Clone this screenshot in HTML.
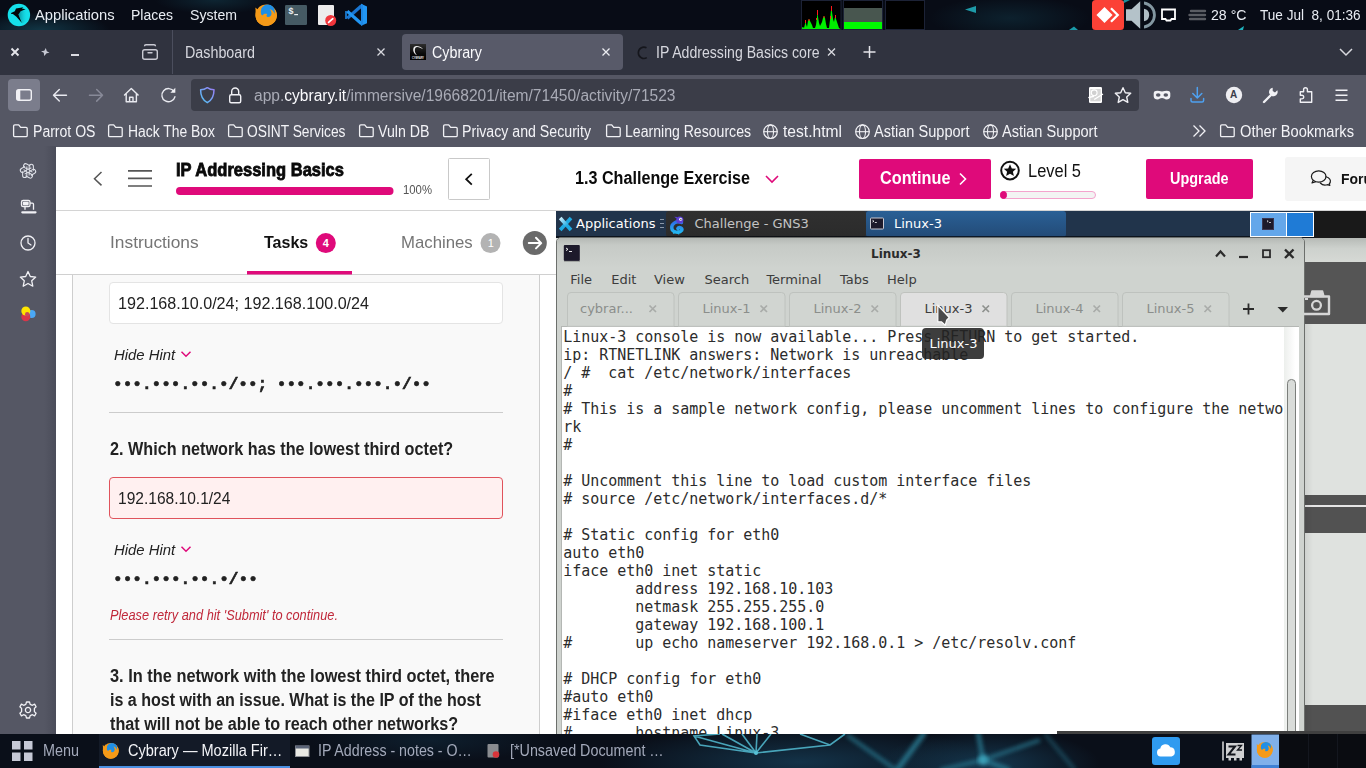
<!DOCTYPE html>
<html lang="en">
<head>
<meta charset="utf-8">
<title>Cybrary — Mozilla Firefox</title>
<style>
*{box-sizing:border-box;margin:0;padding:0}
html,body{width:1366px;height:768px;overflow:hidden;background:#fff}
body{position:relative;font-family:"Liberation Sans",sans-serif;color:#fff}
.a{position:absolute;white-space:nowrap}
.t{position:absolute;white-space:nowrap;line-height:1}
svg{position:absolute;overflow:visible}
/* ---------- top panel ---------- */
#toppanel{left:0;top:0;width:1366px;height:30px;background:#080c16;overflow:hidden}
#toppanel .t{font-size:15.5px;color:#e9edf3;top:6.8px}
/* ---------- firefox chrome ---------- */
#tabbar{left:0;top:30px;width:1366px;height:45px;background:#30333f}
#tabbar .t{font-size:16px;color:#d6d7de;top:15.3px}
#navbar{left:0;top:75px;width:1366px;height:40px;background:#555764}
#bmbar{left:0;top:115px;width:1366px;height:32px;background:#555764}
#bmbar .t{font-size:16px;color:#f3f3f7;top:8.8px}
#ffside{left:0;top:146px;width:56px;height:588px;background:linear-gradient(90deg,#555764 0,#555764 44px,#4b4d5a 56px)}
/* ---------- page ---------- */
#page{left:0;top:0;width:1366px;height:734px;background:#fff;overflow:hidden;color:#222;z-index:0}
#toppanel,#tabbar,#navbar,#bmbar,#ffside,#botpanel{z-index:2}
#page .t{color:#222}
.q{font-size:18px;font-weight:bold;color:#222}
.hh{font-size:15px;font-style:italic;color:#505050}
.dots{font-family:"Liberation Mono",monospace;font-size:16px;font-weight:bold;color:#222;-webkit-text-stroke:.55px #222}
.inp{font-size:18px;color:#383838}
/* gns3 desktop */
#gns{left:556px;top:211px;width:810px;height:523px;background:#dfe2df;overflow:hidden;font-family:"DejaVu Sans",sans-serif}
#gns .t{font-size:13px;color:#3c3c3c}
#gw{position:absolute;left:-556px;top:-211px;width:1366px;height:768px}
.tabl{color:#8b8e8b !important}
#term{position:absolute;left:563.300px;top:328.400px;letter-spacing:-0.031px;font-family:"DejaVu Sans Mono",monospace;font-size:15px;line-height:18px;color:#2c2c2c;white-space:pre}

/* ---------- bottom panel ---------- */
#botpanel{left:0;top:734px;width:1366px;height:34px;background:#0a0f19;overflow:hidden}
#botpanel .t{font-size:16px;color:#e9edf3;top:8.5px}
</style>
<style id="fit">
#tp1{transform:scaleX(0.9524);transform-origin:0 50%}
#tp2{transform:scaleX(0.9026);transform-origin:0 50%}
#tp3{transform:scaleX(0.9093);transform-origin:0 50%}
#tp4{transform:scaleX(0.9114);transform-origin:0 50%}
#tp5{transform:scaleX(0.8756);transform-origin:0 50%}
#tb1{transform:scaleX(0.8942);transform-origin:0 50%}
#tb2{transform:scaleX(0.8926);transform-origin:0 50%}
#tb3{transform:scaleX(0.8810);transform-origin:0 50%}
#url{transform:scaleX(0.9718);transform-origin:0 50%}
#bm0{transform:scaleX(0.8785);transform-origin:0 50%}
#bm1{transform:scaleX(0.8682);transform-origin:0 50%}
#bm2{transform:scaleX(0.8610);transform-origin:0 50%}
#bm3{transform:scaleX(0.8863);transform-origin:0 50%}
#bm4{transform:scaleX(0.8845);transform-origin:0 50%}
#bm5{transform:scaleX(0.8799);transform-origin:0 50%}
#bm6{transform:scaleX(0.9757);transform-origin:0 50%}
#bm7{transform:scaleX(0.9099);transform-origin:0 50%}
#bm8{transform:scaleX(0.9099);transform-origin:0 50%}
#bm9{transform:scaleX(0.9158);transform-origin:0 50%}
#h1{transform:scaleX(0.8928);transform-origin:0 50%}
#h2{transform:scaleX(0.9067);transform-origin:0 50%}
#h3{transform:scaleX(0.8969);transform-origin:0 50%}
#h4{transform:scaleX(0.9038);transform-origin:0 50%}
#h5{transform:scaleX(0.9131);transform-origin:0 50%}
#h6{transform:scaleX(0.9013);transform-origin:0 50%}
#t1{transform:scaleX(1.0203);transform-origin:0 50%}
#t2{transform:scaleX(0.9435);transform-origin:0 50%}
#t3{transform:scaleX(0.9854);transform-origin:0 50%}
#i1{transform:scaleX(0.9483);transform-origin:0 50%}
#hh1{transform:scaleX(0.9918);transform-origin:0 50%}
#d1{transform:scaleX(1.0036);transform-origin:0 50%}
#q2{transform:scaleX(0.9007);transform-origin:0 50%}
#i2{transform:scaleX(0.9145);transform-origin:0 50%}
#hh2{transform:scaleX(0.9918);transform-origin:0 50%}
#d2{transform:scaleX(1.0053);transform-origin:0 50%}
#err{transform:scaleX(0.9131);transform-origin:0 50%}
#q3a{transform:scaleX(0.9094);transform-origin:0 50%}
#q3b{transform:scaleX(0.8919);transform-origin:0 50%}
#q3c{transform:scaleX(0.8996);transform-origin:0 50%}
#bp0{transform:scaleX(0.8993);transform-origin:0 50%}
#bp1{transform:scaleX(0.9087);transform-origin:0 50%}
#bp2{transform:scaleX(0.8885);transform-origin:0 50%}
#bp3{transform:scaleX(0.8955);transform-origin:0 50%}
</style>
</head>
<body>
<div id="toppanel" class="a">
<svg width="1366" height="30" viewBox="0 0 1366 30" style="left:0;top:0">
<defs>
<radialGradient id="tg1" cx="0.5" cy="0.5" r="0.5"><stop offset="0" stop-color="#123a4a" stop-opacity=".9"/><stop offset="1" stop-color="#123a4a" stop-opacity="0"/></radialGradient>
<linearGradient id="pg" x1="0" y1="0" x2="1" y2="1"><stop offset="0" stop-color="#25f0ee"/><stop offset="1" stop-color="#0d8d9c"/></linearGradient>
</defs>
<ellipse cx="40" cy="30" rx="70" ry="18" fill="url(#tg1)"/>
<ellipse cx="215" cy="0" rx="60" ry="14" fill="url(#tg1)" opacity=".6"/>
<ellipse cx="1010" cy="18" rx="80" ry="22" fill="url(#tg1)" opacity=".5"/>
<polygon points="965,9.5 976,6 976,13" fill="#1e9aa8"/>
<polygon points="1238,30 1244,26 1243,30" fill="#1fb3bf"/><polygon points="1069,30 1074,26.500 1078,30" fill="#1a9aa8"/>
<polygon points="1122,4 1130,0 1124,0" fill="#1a8f9c"/>
<!-- parrot logo -->
<circle cx="18.900" cy="15" r="11.200" fill="#15e0ea"/>
<linearGradient id="psh" x1="0" y1="0" x2="1" y2="0"><stop offset="0" stop-color="#0a8d99"/><stop offset="1" stop-color="#15e0ea" stop-opacity="0"/></linearGradient>
<path d="M18.400 14 L21.500 10.800 L27 10.500 L28 20 L22.500 23.500Z" fill="url(#psh)"/>
<path d="M11.100 13.100 L14.800 11.300 L16 8.400 L23.400 7.200 L21.900 8.400 L25.600 9.200 L20.700 11.300 L18.400 14.500 L21.900 23 L16.400 16.800 L12.900 14.100 L11.300 14.100Z" fill="#020608"/>
<!-- firefox -->
<g id="ffx">
<circle cx="266.200" cy="15.200" r="10.700" fill="#f59a18"/>
<circle cx="267.800" cy="11.800" r="7.300" fill="#1f8fe6"/>
<path d="M255.300 7.500 L257.800 9.500 L259.500 6.500 L261.300 9.300 C259.800 12 260.500 14.500 262.500 15.500 C263.500 13.800 265.500 13.300 267.300 14.200 C266.200 15 266.200 16.500 267.500 17 C269.500 17.500 271.500 16 271.500 13.500 C271.500 11.500 270.500 10 269.500 9 C272 9.500 274 11.500 274.500 14 C275 12 274.800 10 274 8.500 C276.500 11 277.500 14.500 276.500 18 C275 23 270.500 26 266 25.900 C260 25.800 255.500 21 255.500 15.200 C255.500 12.500 255.800 10 255.300 7.500Z" fill="#f59a18"/>
</g>
<!-- terminal -->
<rect x="285" y="5" width="22" height="20" rx="1.200" fill="#455a64"/>
<path d="M294.200 14.600 H298" stroke="#e8eef0" stroke-width="1.200"/>
<!-- doc -->
<rect x="318" y="5" width="16" height="20" rx="1" fill="#ececec"/>
<circle cx="330.700" cy="20.500" r="5.500" fill="#f0353b"/>
<path d="M328.600 22.400 L332.800 18.700" stroke="#fff" stroke-width="1.700" stroke-linecap="round"/>
<!-- vscode -->
<path d="M361.500 5.800 L347.300 18.300" stroke="#1976d2" stroke-width="3.200" fill="none"/>
<path d="M361.500 23.800 L347.300 11.300" stroke="#2196f3" stroke-width="3.200" fill="none"/>
<path d="M346 11 V19" stroke="#1e88e5" stroke-width="1.600"/>
<path d="M361 3.800 L367 6.500 V23.300 L361 25.800 Z" fill="#2196f3"/>
<path d="M361 3.800 L363 4.700 V24.900 L361 25.800Z" fill="#1e88e5"/>
<!-- graphs -->
<rect x="801.5" y="0.5" width="39.5" height="29" fill="#000" stroke="#1c2236" stroke-width="1"/>
<path d="M802 29 L802 27.5 L803 27 L804 28 L805 24 L805.5 20 L806 24 L807 27 L808 21 L809 19 L810 21 L811 23 L812 25 L813 28 L815 28 L816 25 L817 17 L817.5 10 L818 17 L819 23 L820 26 L821 24 L822 22 L823 18 L824 16 L825 18 L826 24 L827 28 L829 28 L830 20 L831 10 L831.5 6 L832 12 L833 19 L834 22 L835 17 L835.5 15 L836 19 L837 22 L838 25 L839 28 L840.5 29 Z" fill="#00f000"/>
<path d="M805.5 20 L805.5 23 M809 19 L809 21 M817.5 10 L817.5 15 M824 16 L824 18 M831.5 6 L831.5 11 M835.5 15 L835.5 18 M816.5 18 L816.5 20 M830.5 16 L830.5 19" stroke="#ff1a1a" stroke-width="1"/>
<rect x="843.5" y="0.5" width="39" height="29" fill="#000" stroke="#1c2236" stroke-width="1"/>
<rect x="844" y="8" width="38" height="14" fill="#48564f"/>
<rect x="844" y="22" width="38" height="7" fill="#00fb00"/>
<rect x="885.5" y="0.5" width="39" height="29" fill="#000" stroke="#1c2236" stroke-width="1"/>
<!-- anydesk -->
<rect x="1092" y="0" width="32" height="30" rx="3.500" fill="#fb4136"/>
<rect x="1098.800" y="9.300" width="11.400" height="11.400" transform="rotate(45 1104.500 15)" fill="#fff"/>
<path d="M1111 8.300 L1117.700 15 L1111 21.700" fill="none" stroke="#fff" stroke-width="2.300"/>
<!-- volume -->
<path d="M1126 9.300 H1131.500 L1140.200 1.300 V28.700 L1131.500 20.700 H1126Z" fill="#b4c2c9"/>
<path d="M1144 1.600 A13.500 13.500 0 0 1 1144 28.400 L1144 25.400 A10.500 10.500 0 0 0 1144 4.600Z" fill="#8397a1"/>
<path d="M1144 8.800 A6.300 6.300 0 0 1 1144 21.200Z" fill="#b0bec5"/>
<!-- display -->
<path d="M1162 9.5 H1175 V19 H1171.5 L1170.5 20.5 H1166.5 L1165.5 19 H1162Z" fill="none" stroke="#fff" stroke-width="1.8"/>
<!-- hamburger -->
<path d="M1191 11 H1205 M1189.500 15 H1205 M1190 19 H1205" stroke="#5a5d63" stroke-width="2.4" stroke-linecap="round"/>
</svg>
<span class="t" id="tp1" style="left:35px">Applications</span>
<span class="t" id="tp2" style="left:131px">Places</span>
<span class="t" id="tp3" style="left:190px">System</span>
<span class="t" style="left:288.300px;top:8px;font-size:9px;font-weight:bold;font-family:'Liberation Mono',monospace;color:#e8eef0">$</span>
<span class="t" id="tp4" style="left:1211px">28 °C</span>
<span class="t" id="tp5" style="left:1260px">Tue Jul&nbsp; 8, 01:36</span>
</div>
<div id="tabbar" class="a">
<svg width="1366" height="45" viewBox="0 30 1366 45" style="left:0;top:0">
<!-- window controls -->
<path d="M11.500 48.500 L18.500 55.500 M18.500 48.500 L11.500 55.500" stroke="#e4e5ea" stroke-width="1.9"/>
<path d="M45.800 48 L46.800 51.300 L49.500 52.800 L46.600 53.300 L44.200 56 L43.800 52.700 L41 51.200 L44.300 50.800Z" fill="#c6c8d3"/>
<path d="M71 55 H79" stroke="#e4e5ea" stroke-width="1.9"/>
<!-- firefox view -->
<rect x="142.700" y="49.700" width="14.600" height="9.600" rx="2" fill="none" stroke="#c9cad3" stroke-width="1.400"/>
<path d="M144.500 46.200 Q144.500 44.700 146 44.700 H154 Q155.500 44.700 155.500 46.200" fill="none" stroke="#c9cad3" stroke-width="1.400"/>
<path d="M148 52.800 H152" stroke="#c9cad3" stroke-width="1.400" stroke-linecap="round"/>
<path d="M172.500 30 V74" stroke="#4b4e5d" stroke-width="1"/>
<!-- tab closes -->
<path d="M377.500 48.500 L384.500 55.500 M384.500 48.500 L377.500 55.500" stroke="#d8d9df" stroke-width="1.300"/>
<rect x="402" y="34" width="221" height="36" rx="4" fill="#585a69"/>
<path d="M602.500 48.500 L609.500 55.500 M609.500 48.500 L602.500 55.500" stroke="#ecedf2" stroke-width="1.300"/>
<path d="M828 48.500 L835 55.500 M835 48.500 L828 55.500" stroke="#d8d9df" stroke-width="1.300"/>
<!-- cybrary favicon -->
<linearGradient id="cyg" x1="0" y1="0" x2="0" y2="1"><stop offset="0" stop-color="#2e2e2e"/><stop offset=".6" stop-color="#0a0a0a"/><stop offset="1" stop-color="#000"/></linearGradient>
<rect x="410" y="44" width="16" height="16" fill="url(#cyg)"/>
<path d="M423.200 49.300 C420.500 46.300 416 45.300 414.300 46.800 C412.300 48.800 413 53.500 417 55.300 C414.800 53.300 414.300 50 415.300 48 C416.500 46 420 47 423.200 49.300Z" fill="#efefef"/>
<text x="418" y="58.700" font-size="3.200" font-weight="bold" font-family="Liberation Sans, sans-serif" fill="#e6e6e6" text-anchor="middle" textLength="12" lengthAdjust="spacingAndGlyphs">CYBRARY</text>
<!-- spinner -->
<path d="M646.500 47.800 A5.600 5.600 0 1 0 646.800 57.600" fill="none" stroke="#15161c" stroke-width="1.600"/>
<!-- new tab -->
<path d="M869.500 46 V58 M863.500 52 H875.500" stroke="#e4e5ea" stroke-width="1.500"/>
<path d="M1340 49 L1346 55 L1352 49" fill="none" stroke="#d8d9df" stroke-width="1.500"/>
</svg>
<span class="t" id="tb1" style="left:185px">Dashboard</span>
<span class="t" id="tb2" style="left:432px;color:#fbfbfe">Cybrary</span>
<span class="t" id="tb3" style="left:656px">IP Addressing Basics core</span>
</div>
<div id="navbar" class="a">
<svg width="1366" height="40" viewBox="0 75 1366 40" style="left:0;top:0">
<rect x="8" y="79" width="32" height="32" rx="4" fill="#7b7d8c"/>
<rect x="16.700" y="89.700" width="14.600" height="10.600" rx="2" fill="none" stroke="#f1f1f5" stroke-width="1.400"/>
<path d="M17 90 H20.300 V100 H17Z" fill="#f1f1f5"/>
<!-- back -->
<path d="M66.500 95.300 H53.500 M59.300 89.500 L53.500 95.300 L59.300 101.100" fill="none" stroke="#e9eaf0" stroke-width="1.400" stroke-linecap="round" stroke-linejoin="round"/>
<path d="M89.500 95.300 H102.500 M96.700 89.500 L102.500 95.300 L96.700 101.100" fill="none" stroke="#888a98" stroke-width="1.500" stroke-linecap="round" stroke-linejoin="round"/>
<!-- home -->
<path d="M124.500 95 L131.300 88.500 L138.100 95 M126.200 93.600 V101.800 H136.400 V93.600 M129.600 101.800 V97.300 H133 V101.800" fill="none" stroke="#e9eaf0" stroke-width="1.400" stroke-linecap="round" stroke-linejoin="round"/>
<!-- reload -->
<path d="M174 91.500 A6.600 6.600 0 1 0 174.900 96.800" fill="none" stroke="#e9eaf0" stroke-width="1.400" stroke-linecap="round"/>
<path d="M175.300 87.800 V92.800 H170.300Z" fill="#f1f1f5"/>
<!-- url bar -->
<rect x="191" y="79" width="948" height="32" rx="4" fill="#3b3d48"/>
<defs><linearGradient id="shg" x1="0" y1="1" x2="1" y2="0"><stop offset="0" stop-color="#51c8f5"/><stop offset="1" stop-color="#9a7cf5"/></linearGradient></defs>
<path d="M207.300 87.700 C209.500 89.300 212 89.800 214 89.800 C214 96 212.500 100 207.300 102.700 C202.100 100 200.600 96 200.600 89.800 C202.600 89.800 205.100 89.300 207.300 87.700Z" fill="none" stroke="url(#shg)" stroke-width="1.500" stroke-linejoin="round"/>
<!-- lock -->
<rect x="229.700" y="94.700" width="11" height="8" rx="1.500" fill="none" stroke="#f1f1f5" stroke-width="1.400"/>
<path d="M231.700 94.500 V91.500 A3.500 3.500 0 0 1 238.700 91.500 V94.500" fill="none" stroke="#f1f1f5" stroke-width="1.400"/>
<!-- reader -->
<rect x="1089" y="87" width="13" height="16" rx="1.200" fill="#fff"/>
<rect x="1090.300" y="89" width="10.400" height="12.300" fill="#d6d6d6"/>
<circle cx="1094.200" cy="92.800" r="2.900" fill="#d0d0d0" stroke="#fff" stroke-width="1.100"/>
<path d="M1088.300 97.600 L1094 96.200 M1094.200 99.500 L1103 94" stroke="#fff" stroke-width="1.400"/>
<!-- star -->
<path d="M1123 87.700 L1125.300 92.700 L1130.700 93.300 L1126.700 97 L1127.800 102.400 L1123 99.700 L1118.200 102.400 L1119.300 97 L1115.300 93.300 L1120.700 92.700Z" fill="none" stroke="#f1f1f5" stroke-width="1.400" stroke-linejoin="round"/>
<!-- mask -->
<path d="M1153.700 93.300 C1153.700 90.600 1157 90.200 1162 91.600 C1167 90.200 1170.300 90.600 1170.300 93.300 V96.300 C1170.300 99.500 1166 100.400 1164.100 98.600 C1163 97.700 1161 97.700 1159.900 98.600 C1158 100.400 1153.700 99.500 1153.700 96.300Z" fill="#f1f1f5"/>
<ellipse cx="1158.200" cy="95" rx="2.300" ry="1.700" fill="#555764"/><ellipse cx="1165.800" cy="95" rx="2.300" ry="1.700" fill="#555764"/>
<!-- download -->
<path d="M1197.300 87.500 V97.800 M1192.800 93.500 L1197.300 98 L1201.800 93.500 M1191 98.500 V100.500 Q1191 102 1192.500 102 H1202.100 Q1203.600 102 1203.600 100.500 V98.500" fill="none" stroke="#4ea1f0" stroke-width="1.500" stroke-linecap="round" stroke-linejoin="round"/>
<!-- A -->
<circle cx="1234" cy="95" r="8.200" fill="#eeeef2"/>
<!-- wrench -->
<path d="M1264 102 L1270.500 95.500" stroke="#f1f1f5" stroke-width="2.400" stroke-linecap="round"/>
<path d="M1277.300 90.300 A4.300 4.300 0 1 1 1272.700 87.700 L1272.700 91 L1275 92.500Z" fill="#f1f1f5"/>
<!-- puzzle -->
<path d="M1300.300 91.700 H1303.600 V89.600 A1.900 1.900 0 0 1 1307.400 89.600 V91.700 H1311.700 V102.300 H1300.300 V98.900 H1302 A1.800 1.800 0 0 0 1302 95.300 H1300.300Z" fill="none" stroke="#f1f1f5" stroke-width="1.400" stroke-linejoin="round"/>
<!-- menu -->
<path d="M1335.500 90.300 H1347.500 M1335.500 95.300 H1347.500 M1335.500 100.300 H1347.500" stroke="#f1f1f5" stroke-width="1.400"/>
</svg>
<span class="t" id="url" style="left:253.500px;top:13px;font-size:16px;color:#a9abb6">app.<span style="color:#fbfbfe">cybrary.it</span>/immersive/19668201/item/71450/activity/71523</span>
<span class="t" style="left:1230px;top:15px;font-size:10px;font-weight:bold;color:#3a3c49;line-height:1">A</span>
</div>
<div id="bmbar" class="a"><svg width="1366" height="31" viewBox="0 115 1366 31" style="left:0;top:0"><path d="M13.6 126 Q13.6 124.800 14.8 124.800 H18.7 L20.7 127.400 H26.0 Q27.2 127.400 27.2 128.600 V135.400 Q27.2 136.600 26.0 136.600 H14.8 Q13.6 136.600 13.6 135.400Z" fill="none" stroke="#f1f1f5" stroke-width="1.300" stroke-linejoin="round"/><path d="M108.6 126 Q108.6 124.800 109.8 124.800 H113.7 L115.7 127.400 H121.0 Q122.2 127.400 122.2 128.600 V135.400 Q122.2 136.600 121.0 136.600 H109.8 Q108.6 136.600 108.6 135.400Z" fill="none" stroke="#f1f1f5" stroke-width="1.300" stroke-linejoin="round"/><path d="M228.6 126 Q228.6 124.800 229.8 124.800 H233.7 L235.7 127.400 H241.0 Q242.2 127.400 242.2 128.600 V135.400 Q242.2 136.600 241.0 136.600 H229.8 Q228.6 136.600 228.6 135.400Z" fill="none" stroke="#f1f1f5" stroke-width="1.300" stroke-linejoin="round"/><path d="M359.6 126 Q359.6 124.800 360.8 124.800 H364.7 L366.7 127.400 H372.0 Q373.2 127.400 373.2 128.600 V135.400 Q373.2 136.600 372.0 136.600 H360.8 Q359.6 136.600 359.6 135.400Z" fill="none" stroke="#f1f1f5" stroke-width="1.300" stroke-linejoin="round"/><path d="M443.6 126 Q443.6 124.800 444.8 124.800 H448.7 L450.7 127.400 H456.0 Q457.2 127.400 457.2 128.600 V135.400 Q457.2 136.600 456.0 136.600 H444.8 Q443.6 136.600 443.6 135.400Z" fill="none" stroke="#f1f1f5" stroke-width="1.300" stroke-linejoin="round"/><path d="M606.6 126 Q606.6 124.800 607.8 124.800 H611.7 L613.7 127.400 H619.0 Q620.2 127.400 620.2 128.600 V135.400 Q620.2 136.600 619.0 136.600 H607.8 Q606.6 136.600 606.6 135.400Z" fill="none" stroke="#f1f1f5" stroke-width="1.300" stroke-linejoin="round"/><path d="M1220.6 126 Q1220.6 124.800 1221.8 124.800 H1225.7 L1227.7 127.400 H1233.0 Q1234.2 127.400 1234.2 128.600 V135.400 Q1234.2 136.600 1233.0 136.600 H1221.8 Q1220.6 136.600 1220.6 135.400Z" fill="none" stroke="#f1f1f5" stroke-width="1.300" stroke-linejoin="round"/><circle cx="770.5" cy="131.700" r="6.800" fill="none" stroke="#f1f1f5" stroke-width="1.200"/><ellipse cx="770.5" cy="131.700" rx="3" ry="6.800" fill="none" stroke="#f1f1f5" stroke-width="1.100"/><path d="M763.7 131.700 H777.3" stroke="#f1f1f5" stroke-width="1.100"/><circle cx="862.5" cy="131.700" r="6.800" fill="none" stroke="#f1f1f5" stroke-width="1.200"/><ellipse cx="862.5" cy="131.700" rx="3" ry="6.800" fill="none" stroke="#f1f1f5" stroke-width="1.100"/><path d="M855.7 131.700 H869.3" stroke="#f1f1f5" stroke-width="1.100"/><circle cx="990.5" cy="131.700" r="6.800" fill="none" stroke="#f1f1f5" stroke-width="1.200"/><ellipse cx="990.5" cy="131.700" rx="3" ry="6.800" fill="none" stroke="#f1f1f5" stroke-width="1.100"/><path d="M983.7 131.700 H997.3" stroke="#f1f1f5" stroke-width="1.100"/><path d="M1193.500 125.500 L1199 131 L1193.500 136.500 M1199.500 125.500 L1205 131 L1199.500 136.500" fill="none" stroke="#f1f1f5" stroke-width="1.300"/></svg><span class="t" id="bm0" style="left:32.5px">Parrot OS</span><span class="t" id="bm1" style="left:128px">Hack The Box</span><span class="t" id="bm2" style="left:247px">OSINT Services</span><span class="t" id="bm3" style="left:378px">Vuln DB</span><span class="t" id="bm4" style="left:462px">Privacy and Security</span><span class="t" id="bm5" style="left:624.5px">Learning Resources</span><span class="t" id="bm6" style="left:783px">test.html</span><span class="t" id="bm7" style="left:874px">Astian Support</span><span class="t" id="bm8" style="left:1002px">Astian Support</span><span class="t" id="bm9" style="left:1240px">Other Bookmarks</span></div>
<div id="ffside" class="a">
<svg width="56" height="587" viewBox="0 146 56 587" style="left:0;top:0">
<g fill="none" stroke="#f1f1f5" stroke-width="1.300">
<!-- chatgpt -->
<g transform="translate(28 170.900) scale(.84)" stroke="#dfe1e8" stroke-width="1.250"><path d="M1.400 -0.800 V-5.400 A2.500 2.500 0 0 1 6.400 -5.400 V-0.300" transform="rotate(0)"/><path d="M1.400 -0.800 L5.300 1.500" transform="rotate(0)"/><path d="M1.400 -0.800 V-5.400 A2.500 2.500 0 0 1 6.400 -5.400 V-0.300" transform="rotate(60)"/><path d="M1.400 -0.800 L5.300 1.500" transform="rotate(60)"/><path d="M1.400 -0.800 V-5.400 A2.500 2.500 0 0 1 6.400 -5.400 V-0.300" transform="rotate(120)"/><path d="M1.400 -0.800 L5.300 1.500" transform="rotate(120)"/><path d="M1.400 -0.800 V-5.400 A2.500 2.500 0 0 1 6.400 -5.400 V-0.300" transform="rotate(180)"/><path d="M1.400 -0.800 L5.300 1.500" transform="rotate(180)"/><path d="M1.400 -0.800 V-5.400 A2.500 2.500 0 0 1 6.400 -5.400 V-0.300" transform="rotate(240)"/><path d="M1.400 -0.800 L5.300 1.500" transform="rotate(240)"/><path d="M1.400 -0.800 V-5.400 A2.500 2.500 0 0 1 6.400 -5.400 V-0.300" transform="rotate(300)"/><path d="M1.400 -0.800 L5.300 1.500" transform="rotate(300)"/></g>
<!-- synced tabs -->
<path d="M25 209.800 V204.200 Q25 203.200 26 203.200 H32.500 Q33.500 203.200 33.500 204.200 V209.800" /><path d="M22.300 212.300 H35.500" stroke-width="2.200" stroke-linecap="round"/><rect x="21.500" y="200.500" width="8.500" height="6" rx="1.600" fill="#555764"/><rect x="22.800" y="201.800" width="5.900" height="3.400" rx="1" fill="#f1f1f5" stroke="none"/>
<!-- history -->
<circle cx="28" cy="243" r="7"/><path d="M28 238.500 V243 L31 245" stroke-linecap="round"/>
<!-- bookmarks star -->
<path d="M28 271.500 L30.300 276.500 L35.700 277.100 L31.700 280.800 L32.800 286.200 L28 283.500 L23.200 286.200 L24.300 280.800 L20.300 277.100 L25.700 276.500Z" stroke-linejoin="round"/>
<!-- settings -->
<g transform="translate(28 710)"><circle r="2.600"/><path d="M-1.500 -8 H1.500 L2.200 -5.600 L4.400 -4.700 L6.600 -5.900 L8.100 -3.300 L6.400 -1.600 V1.600 L8.100 3.300 L6.600 5.900 L4.400 4.700 L2.200 5.600 L1.500 8 H-1.500 L-2.200 5.600 L-4.400 4.700 L-6.600 5.900 L-8.100 3.300 L-6.400 1.600 V-1.600 L-8.100 -3.300 L-6.600 -5.900 L-4.400 -4.700 L-2.200 -5.600Z" stroke-linejoin="round"/></g>
</g>
<circle cx="31.600" cy="314" r="4" fill="#4aa8f5"/><circle cx="25.800" cy="316.700" r="4.500" fill="#d9364a"/><circle cx="25.800" cy="311" r="4.500" fill="#ffe600"/><circle cx="27.200" cy="314.300" r="2.200" fill="#c94a5a"/>
</svg>
</div>
<div id="page" class="a">
<!-- header -->
<div class="a" style="left:56px;top:146px;width:1310px;height:65px;background:#fff;border-bottom:1px solid #d4d4d4"></div>
<svg width="1310" height="130" viewBox="56 146 1310 130" style="left:56px;top:146px">
<path d="M101.500 172 L94.500 178.700 L101.500 185.400" fill="none" stroke="#555" stroke-width="1.500"/>
<path d="M128 170.800 H152 M128 178.400 H152 M128 186 H152" stroke="#555" stroke-width="1.700"/>
<rect x="176" y="187" width="217.500" height="8" rx="4" fill="#df0a7a"/>
<rect x="448.500" y="158.500" width="41" height="41" rx="1" fill="#fff" stroke="#c9c9c9"/>
<path d="M471.800 173.800 L466.200 179.200 L471.800 184.600" fill="none" stroke="#111" stroke-width="1.800"/>
<path d="M766 176 L772 182 L778 176" fill="none" stroke="#df0a7a" stroke-width="1.600"/>
<rect x="859" y="159" width="132" height="40" rx="2" fill="#df0a7a"/>
<path d="M960 173.500 L965.500 179 L960 184.500" fill="none" stroke="#fff" stroke-width="1.600"/>
<circle cx="1010" cy="170.600" r="8.800" fill="none" stroke="#111" stroke-width="2"/>
<path d="M1010 164.300 L1011.800 168.400 L1016.200 168.800 L1012.900 171.700 L1013.900 176.100 L1010 173.800 L1006.100 176.100 L1007.100 171.700 L1003.800 168.800 L1008.200 168.400Z" fill="#111"/>
<rect x="1000.500" y="191.500" width="95" height="7" rx="3.500" fill="#f3f3f3" stroke="#f4a3cd"/>
<rect x="1000.500" y="191.500" width="6" height="7" rx="3" fill="#df0a7a" stroke="#df0a7a"/>
<rect x="1146" y="159" width="107" height="40" rx="2" fill="#df0a7a"/>
<rect x="1285" y="157" width="90" height="44" rx="3" fill="#f5f5f5"/>
<ellipse cx="1318.700" cy="176.500" rx="7.300" ry="5.600" fill="#f5f5f5" stroke="#1a1a1a" stroke-width="1.200"/>
<path d="M1313.300 180.200 L1312 183 L1315.800 181.700" fill="none" stroke="#1a1a1a" stroke-width="1.200" stroke-linejoin="round"/>
<path d="M1326 176.800 C1329 177.800 1330.800 179.800 1330.300 182 C1330.100 182.800 1329.700 183.400 1329.200 183.900 L1329.900 185.300 L1327.300 184.700 C1325 185.500 1322 184.800 1320.300 183" fill="none" stroke="#1a1a1a" stroke-width="1.200" stroke-linejoin="round" stroke-linecap="round"/>
<!-- tab row -->
<path d="M56 274.500 H556" stroke="#d0d0d0"/>
<rect x="247" y="271" width="105" height="3.500" fill="#df0a7a"/>
<circle cx="325.800" cy="243.100" r="10" fill="#df0a7a"/>
<circle cx="490.500" cy="243.100" r="10" fill="#b3b3b3"/>
<circle cx="534.800" cy="243.100" r="12" fill="#6a6a6a"/>
<path d="M528.800 243.100 H540.800 M536 237.800 L541.200 243.100 L536 248.400" fill="none" stroke="#fff" stroke-width="2" stroke-linecap="round" stroke-linejoin="round"/>
</svg>
<span class="t" id="h1" style="left:176px;top:160.7px;font-size:18.5px;font-weight:bold;color:#0a0a0a;-webkit-text-stroke:0.8px #0a0a0a">IP Addressing Basics</span>
<span class="t" id="h2" style="left:402.500px;top:184.1px;font-size:12.5px;color:#555">100%</span>
<span class="t" id="h3" style="left:574.500px;top:169.2px;font-size:18px;font-weight:bold;color:#0a0a0a">1.3 Challenge Exercise</span>
<span class="t" id="h4" style="left:879.500px;top:169.2px;font-size:18px;font-weight:bold;color:#fff">Continue</span>
<span class="t" id="h5" style="left:1028px;top:161.7px;font-size:18px;color:#111">Level 5</span>
<span class="t" id="h6" style="left:1169.500px;top:170.5px;font-size:16px;font-weight:bold;color:#fff">Upgrade</span>
<span class="t" id="h7" style="left:1340.500px;top:171.200px;font-size:15.500px;font-weight:bold;color:#111;transform:scaleX(.9);transform-origin:0 50%">Forum</span>
<span class="t" id="t1" style="left:110px;top:233.6px;font-size:17px;color:#757575">Instructions</span>
<span class="t" id="t2" style="left:263.500px;top:233.6px;font-size:17px;font-weight:bold;color:#111">Tasks</span>
<span class="t" id="t3" style="left:400.500px;top:233.6px;font-size:17px;color:#757575">Machines</span>
<span class="t" style="left:322.800px;top:238px;font-size:11px;color:#fff;font-weight:bold">4</span>
<span class="t" style="left:487.700px;top:238px;font-size:11px;color:#fff">1</span>
<!-- left content -->
<div class="a" style="left:56px;top:275px;width:500px;height:458px;background:#fff"></div>
<div class="a" style="left:72px;top:275px;width:467.800px;height:470px;background:#f9f9f9;border:1px solid #cecece;border-top:none"></div>
<div class="a" style="left:56px;top:211px;width:500px;height:64px;background:#fff;border-bottom:1px solid #d0d0d0;z-index:-1"></div>
<div class="a" style="left:109px;top:282px;width:393.500px;height:41.500px;background:#fff;border:1px solid #e4e4e4;border-radius:4px"></div>
<span class="t inp" id="i1" style="left:118px;top:294.5px;font-size:17px">192.168.10.0/24; 192.168.100.0/24</span>
<span class="t hh" id="hh1" style="left:113.500px;top:347.0px">Hide Hint</span>
<span class="t dots" id="d1" style="left:113.200px;top:377.300px">•••.•••.••.•/••; •••.•••.•••.•/••</span>
<div class="a" style="left:109px;top:412px;width:393.500px;height:1px;background:#ccc"></div>
<span class="t q" id="q2" style="left:109.500px;top:439.6px">2. Which network has the lowest third octet?</span>
<div class="a" style="left:109px;top:477px;width:393.500px;height:41.500px;background:#fff0f0;border:1px solid #e0535c;border-radius:4px"></div>
<span class="t inp" id="i2" style="left:118px;top:489.6px;font-size:17px">192.168.10.1/24</span>
<span class="t hh" id="hh2" style="left:113.500px;top:541.7px">Hide Hint</span>
<span class="t dots" id="d2" style="left:113.200px;top:571.600px">•••.•••.••.•/••</span>
<span class="t" id="err" style="left:109.500px;top:608.2px;font-size:14px;font-style:italic;color:#c0283a">Please retry and hit 'Submit' to continue.</span>
<div class="a" style="left:109px;top:639px;width:393.500px;height:1px;background:#ccc"></div>
<span class="t q" id="q3a" style="left:109.500px;top:666.8px">3. In the network with the lowest third octet, there</span>
<span class="t q" id="q3b" style="left:109.500px;top:690.6px">is a host with an issue. What is the IP of the host</span>
<span class="t q" id="q3c" style="left:109.500px;top:714.8px">that will not be able to reach other networks?</span>
<svg width="20" height="220" viewBox="176 340 20 220" style="left:176px;top:340px">
<path d="M181.500 351.800 L186 356.200 L190.500 351.800" fill="none" stroke="#df0a7a" stroke-width="1.500"/>
<path d="M181.500 546.800 L186 551.200 L190.500 546.800" fill="none" stroke="#df0a7a" stroke-width="1.500"/>
</svg>
<div id="gns" class="a"><div id="gw">
<!-- background gns3 window bits -->
<div class="a" style="left:1300px;top:237px;width:66px;height:25px;background:linear-gradient(#b4b8b4,#cdd1cd 45%,#d6d9d5)"></div>
<div class="a" style="left:1300px;top:262px;width:66px;height:62px;background:#555"></div>
<div class="a" style="left:1300px;top:494.500px;width:66px;height:10px;background:#525252"></div>
<div class="a" style="left:1300px;top:504.500px;width:66px;height:2.500px;background:#e6e6e6"></div>
<div class="a" style="left:1300px;top:507px;width:66px;height:25.500px;background:#525252"></div>
<div class="a" style="left:1300px;top:705px;width:66px;height:30px;background:#525252"></div>
<!-- xfce panel -->
<div class="a" style="left:556px;top:211px;width:810px;height:26.500px;background:#21344b"></div>
<div class="a" style="left:666px;top:211px;width:200px;height:26px;background:linear-gradient(#303030,#2b2b2b);border-radius:3px"></div>
<div class="a" style="left:866px;top:211px;width:200px;height:26px;background:linear-gradient(#2a6096,#234b77);border-radius:3px"></div><div class="a" style="left:556px;top:236px;width:810px;height:1.500px;background:rgba(5,8,14,.75)"></div>
<div class="a" style="left:1313.500px;top:211px;width:53px;height:26.500px;background:#191919"></div>
<div class="a" style="left:1250px;top:212px;width:63.500px;height:24.500px;background:#1f7bd6;border:1px solid #fdfeff"></div>
<div class="a" style="left:1251px;top:213px;width:35.500px;height:22.500px;background:#64a7ea;border-right:1px solid #fdfeff"></div>
<div class="a" style="left:1261.500px;top:218px;width:12.500px;height:11.500px;background:#1d1a2b;border:1px solid #3a3650"></div>
<!-- terminal window -->
<div class="a" style="left:556px;top:237px;width:748.500px;height:500px;background:#cfd3cf;border:1px solid #6c6f6c;border-radius:5px 5px 0 0"></div>
<div class="a" style="left:557px;top:238px;width:746.500px;height:30px;background:linear-gradient(#b4b8b4 0,#c6cac6 7px,#cfd3cf 100%);border-radius:4px 4px 0 0"></div>
<div class="a" style="left:561px;top:326px;width:738px;height:410px;background:#fff;border-left:1px solid #b4b7b4;border-top:1px solid #b4b7b4"></div>
<div class="a" style="left:1284px;top:327px;width:15.300px;height:410px;background:linear-gradient(90deg,#ecefec,#f6f7f6 40%,#fff 75%)"></div>
<div class="a" style="left:1287px;top:379px;width:8.600px;height:380px;background:#d9dcd9;border:1px solid #7b7e7b;border-radius:4.300px"></div>
<div class="a" style="left:1305px;top:324px;width:8px;height:410px;background:linear-gradient(90deg,rgba(0,0,0,.07),rgba(0,0,0,0))"></div>
<svg width="810" height="130" viewBox="556 211 810 130" style="left:556px;top:211px">
<!-- xfce logo -->
<linearGradient id="xg" gradientUnits="userSpaceOnUse" x1="559" y1="217" x2="567" y2="226"><stop offset="0" stop-color="#e4f7ff"/><stop offset="1" stop-color="#1fabe4"/></linearGradient>
<path d="M571 218 L560.200 230" stroke="#1fabe4" stroke-width="3.600"/>
<path d="M560.200 218 L571 230" stroke="url(#xg)" stroke-width="3.600"/>
<path d="M660 219.500 H664 M660 223.500 H664 M660 227.500 H664" stroke="#8a97a8" stroke-width="1"/>
<!-- gns3 chameleon -->
<linearGradient id="chg" x1="0" y1="0" x2="0" y2="1"><stop offset="0" stop-color="#2f6fe8"/><stop offset="1" stop-color="#22b4f0"/></linearGradient>
<path d="M681.500 222.500 C676.500 220.500 671 223.500 671.800 228.500 C672.500 232.500 679.500 233.500 681.800 230.300 C683 228 679 226.300 677.800 228.600" fill="none" stroke="url(#chg)" stroke-width="3.400" stroke-linecap="round"/>
<path d="M674 232.300 L673.500 233.800 M678.500 233 L678.800 234.300" stroke="#22b4f0" stroke-width="1.400"/>
<circle cx="679.800" cy="220" r="3.600" fill="#5b3fd6"/>
<path d="M676.500 218.500 L674.200 216.800 L677.500 217Z" fill="#5b3fd6"/>
<circle cx="680.600" cy="219.300" r="1.500" fill="#f4f2ff"/>
<circle cx="680.900" cy="219.300" r=".600" fill="#222"/>
<!-- term icons -->
<rect x="870.500" y="218" width="13" height="11" rx=".800" fill="#1d1a2b" stroke="#c9c9d2" stroke-width="1"/>
<path d="M872.500 220.300 L874 221.200 L872.500 222.100 M874.800 222.500 H876.800" stroke="#fff" stroke-width=".8" fill="none"/>
<rect x="563.800" y="245" width="16" height="16" rx="1" fill="#1d1a2b"/>
<path d="M564 261.300 H580" stroke="#8b8e8b" stroke-width=".8"/>
<path d="M566 248 L568 249.300 L566 250.600 M569 251.500 H572" stroke="#fff" stroke-width=".9" fill="none"/>
<path d="M1267 220.500 L1268.200 221.300 L1267 222.100 M1269 222.500 H1271" stroke="#fff" stroke-width=".7" fill="none"/>
<!-- window buttons -->
<path d="M1216 256.500 L1220.500 251.500 L1225 256.500" fill="none" stroke="#2b2b2b" stroke-width="2.200"/>
<path d="M1239 257 H1248" stroke="#2b2b2b" stroke-width="2.200"/>
<rect x="1263" y="250.200" width="7" height="7" fill="none" stroke="#2b2b2b" stroke-width="1.800"/>
<path d="M1285 249.500 L1293.500 258 M1293.500 249.500 L1285 258" stroke="#2b2b2b" stroke-width="2.400"/>
<!-- tabs -->
<g fill="#d1d5d1" stroke="#bec2be" stroke-width="1">
<path d="M567.500 326.300 V296 Q567.500 292.500 571 292.500 H670.500 Q674 292.500 674 296 V326.300Z"/>
<path d="M678.500 326.300 V296 Q678.500 292.500 682 292.500 H781.500 Q785 292.500 785 296 V326.300Z"/>
<path d="M789.500 326.300 V296 Q789.500 292.500 793 292.500 H892.500 Q896 292.500 896 296 V326.300Z"/>
<path d="M1011.500 326.300 V296 Q1011.500 292.500 1015 292.500 H1114.500 Q1118 292.500 1118 296 V326.300Z"/>
<path d="M1122.500 326.300 V296 Q1122.500 292.500 1126 292.500 H1225.500 Q1229 292.500 1229 296 V326.300Z"/>
</g>
<path d="M900.500 326.300 V296 Q900.500 292.500 904 292.500 H1003.500 Q1007 292.500 1007 296 V326.300Z" fill="#e0e0e0" stroke="#bfc2be"/>
<g stroke="#a9aca9" stroke-width="1.700">
<path d="M649.500 305.500 L656 312 M656 305.500 L649.500 312"/>
<path d="M760.500 305.500 L767 312 M767 305.500 L760.500 312"/>
<path d="M871.500 305.500 L878 312 M878 305.500 L871.500 312"/>
<path d="M1093.500 305.500 L1100 312 M1100 305.500 L1093.500 312"/>
<path d="M1204.500 305.500 L1211 312 M1211 305.500 L1204.500 312"/>
</g>
<path d="M982.500 305.500 L989 312 M989 305.500 L982.500 312" stroke="#8e918e" stroke-width="1.700"/>
<path d="M1248.500 303.500 V314.500 M1243 309 H1254" stroke="#2b2b2b" stroke-width="1.800"/>
<path d="M1277.500 307 H1288 L1282.800 312.500Z" fill="#2b2b2b"/>
<!-- camera -->
<path d="M1304 296.500 H1329 V314 H1304" fill="none" stroke="#d6d6d6" stroke-width="2.400" stroke-linejoin="round"/><path d="M1310.500 296.500 L1312 291 H1322.500 L1324 296.500Z" fill="#d6d6d6" stroke="#d6d6d6" stroke-width="1.500" stroke-linejoin="round"/><rect x="1305" y="298" width="3" height="2" fill="#d6d6d6"/>
<circle cx="1316.500" cy="305.300" r="4.400" fill="none" stroke="#d6d6d6" stroke-width="2.300"/>
</svg>
<span class="t" id="g1" style="left:576px;top:217px;color:#fff">Applications</span>
<span class="t" id="g2" style="left:694.500px;top:217px;color:#c4c4c4">Challenge - GNS3</span>
<span class="t" id="g3" style="left:894px;top:217px;color:#fff">Linux-3</span>
<span class="t" id="g4" style="left:871px;top:247.500px;font-size:12px;font-weight:bold;color:#2b2b2b">Linux-3</span>
<span class="t" id="m1" style="left:570.300px;top:272.500px">File</span>
<span class="t" id="m2" style="left:611.300px;top:272.500px">Edit</span>
<span class="t" id="m3" style="left:654px;top:272.500px">View</span>
<span class="t" id="m4" style="left:704.500px;top:272.500px">Search</span>
<span class="t" id="m5" style="left:766.400px;top:272.500px">Terminal</span>
<span class="t" id="m6" style="left:840px;top:272.500px">Tabs</span>
<span class="t" id="m7" style="left:887px;top:272.500px">Help</span>
<span class="t tabl" id="tl0" style="left:580px;top:302px">cybrar...</span>
<span class="t tabl" id="tl1" style="left:702.500px;top:302px">Linux-1</span>
<span class="t tabl" id="tl2" style="left:813.500px;top:302px">Linux-2</span>
<span class="t" id="tl3" style="left:924.500px;top:302px">Linux-3</span>
<span class="t tabl" id="tl4" style="left:1035.500px;top:302px">Linux-4</span>
<span class="t tabl" id="tl5" style="left:1146.500px;top:302px">Linux-5</span>
<pre id="term">Linux-3 console is now available... Press RETURN to get started.
ip: RTNETLINK answers: Network is unreachable
/ #  cat /etc/network/interfaces
#
# This is a sample network config, please uncomment lines to configure the netwo
rk
#

# Uncomment this line to load custom interface files
# source /etc/network/interfaces.d/*

# Static config for eth0
auto eth0
iface eth0 inet static
        address 192.168.10.103
        netmask 255.255.255.0
        gateway 192.168.100.1
#       up echo nameserver 192.168.0.1 &gt; /etc/resolv.conf

# DHCP config for eth0
#auto eth0
#iface eth0 inet dhcp
#       hostname Linux-3</pre>
<!-- tooltip -->
<div class="a" style="left:922px;top:328px;width:62px;height:30.500px;background:rgba(34,34,34,.88);border-radius:4px"></div>
<span class="t" id="tt" style="left:929.500px;top:336.500px;color:#fff">Linux-3</span>
<!-- cursor -->
<svg width="20" height="26" viewBox="934 302 20 26" style="left:934px;top:302px"><path d="M937.800 305.300 V321.800 H941.300 L945.300 325.200 L946.600 320.300 L949.300 317.500Z" fill="#4a4a4a" stroke="#fafafa" stroke-width="1.300" stroke-linejoin="round"/></svg>
<!-- bottom dark strip -->
<div class="a" style="left:1057px;top:730.500px;width:309px;height:4px;background:#404040"></div>
</div></div>
</div>
<div id="botpanel" class="a">
<svg width="1366" height="34" viewBox="0 734 1366 34" style="left:0;top:0">
<defs>
<linearGradient id="bs1" x1="0" y1="0" x2="1" y2="0"><stop offset="0" stop-color="#1b4a63" stop-opacity="0"/><stop offset=".5" stop-color="#1f5f7c" stop-opacity=".85"/><stop offset="1" stop-color="#1b4a63" stop-opacity="0"/></linearGradient>
<radialGradient id="bg2" cx="0.5" cy="0.5" r="0.5"><stop offset="0" stop-color="#17405a" stop-opacity=".9"/><stop offset="1" stop-color="#17405a" stop-opacity="0"/></radialGradient>
</defs>
<filter id="bl1" x="-20%" y="-50%" width="140%" height="200%"><feGaussianBlur stdDeviation="2.2"/></filter>
<filter id="bl2" x="-20%" y="-50%" width="140%" height="200%"><feGaussianBlur stdDeviation="0.7"/></filter>
<ellipse cx="800" cy="762" rx="200" ry="36" fill="url(#bg2)" opacity=".8"/>
<ellipse cx="990" cy="765" rx="110" ry="36" fill="url(#bg2)" opacity=".9"/>
<ellipse cx="430" cy="740" rx="120" ry="22" fill="url(#bg2)" opacity=".35"/>
<g filter="url(#bl2)" stroke="#4fb3c9" stroke-width="1.600" fill="none" opacity=".9">
<path d="M756 753 L694 736 M756 753 L700 745 L694 736 L720 734 M756 753 L722 734 M756 753 L742 734 M756 753 L757 734 M756 753 L771 734 M756 753 L830 745 L845 734 M830 745 L800 734"/>
</g>
<circle cx="756" cy="753" r="2" fill="#58c2d6" filter="url(#bl2)"/>
<g filter="url(#bl1)" stroke="#2b8098" fill="none" opacity=".85">
<path d="M847 735 L896 770" stroke-width="3"/>
<path d="M925 732 L897 770" stroke-width="5"/>
<path d="M978 732 L983 760 L1010 770" stroke-width="4"/>
<path d="M983 760 L940 770 M983 760 L1040 740" stroke-width="3"/>
<path d="M1045 734 L1075 770" stroke-width="3" opacity=".6"/>
</g>
<circle cx="983" cy="760" r="5" fill="#3aa0b8" filter="url(#bl1)"/>
<!-- menu -->
<g fill="#c6c9d6"><rect x="12" y="741" width="8.500" height="8.500"/><rect x="24" y="741" width="8.500" height="8.500"/><rect x="12" y="752.500" width="8.500" height="8.500"/><rect x="24" y="752.500" width="8.500" height="8.500"/></g>
<!-- active task -->
<rect x="99" y="734" width="191" height="34" fill="#1c2433" opacity=".55"/>
<rect x="99" y="766" width="191" height="2" fill="#4a90e2"/>
<use href="#ffx" transform="translate(110.800 750.800) scale(.74) translate(-266.200 -15.200)"/>
<!-- window icon -->
<rect x="295.500" y="746" width="13.500" height="10.500" fill="#e9e9e4" stroke="#8d8f95" stroke-width="1"/>
<rect x="295.500" y="745.500" width="13.500" height="3" fill="#5b6478"/>
<!-- doc icon -->
<rect x="487.500" y="744" width="11" height="13.500" rx="1" fill="#8a8c90"/>
<circle cx="496" cy="754.500" r="3.300" fill="#d8343a"/>
<!-- cloud -->
<rect x="1152" y="737" width="28" height="28" rx="3" fill="#2f9bf0"/>
<path d="M1160.500 756.500 A4 4 0 0 1 1160.300 748.600 A5.300 5.300 0 0 1 1170.300 747.300 A4.700 4.700 0 0 1 1171.500 756.500Z" fill="#fff"/>
<!-- zz -->
<path d="M1223 741.500 V760.500" stroke="#cfd0d2" stroke-width="1.600"/>
<path d="M1226 743 H1244 V758 H1242 V760.500 H1239.500 V758 H1236.500 V760.500 H1234 V758 H1231 V760.500 H1228.500 V758 H1226Z" fill="#cfd0d2"/>
<path d="M1228.500 746.500 H1235 L1228.500 754.500 H1235.500" fill="none" stroke="#12151c" stroke-width="2"/>
<path d="M1237.500 745.500 H1241.500 L1237.500 750 H1242" fill="none" stroke="#12151c" stroke-width="1.300"/>
<!-- firefox cell -->
<rect x="1251.500" y="734.500" width="27.500" height="33.500" fill="#80b0ea"/>
<rect x="1251.500" y="765" width="27.500" height="3" fill="#3f80d4"/>
<use href="#ffx" transform="translate(1264.800 749.800) scale(.74) translate(-266.200 -15.200)"/>
<!-- workspaces -->
<rect x="1280" y="734" width="86" height="34" fill="#0a0c11"/>
<path d="M1308.500 734 V768 M1337.500 734 V768" stroke="#14171f" stroke-width="1"/>
</svg>
<span class="t" id="bp0" style="left:42.500px;color:#a3a9ba">Menu</span>
<span class="t" id="bp1" style="left:127.500px;color:#f4f5f8">Cybrary — Mozilla Fir…</span>
<span class="t" id="bp2" style="left:318px;color:#a3a9ba">IP Address - notes - O…</span>
<span class="t" id="bp3" style="left:510px;color:#a3a9ba">[*Unsaved Document …</span>
</div>
</body>
</html>
